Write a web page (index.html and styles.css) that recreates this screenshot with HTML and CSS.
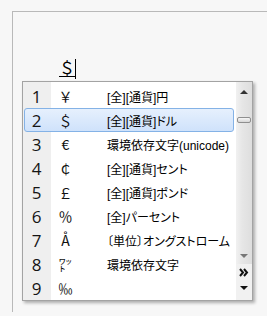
FILE: index.html
```html
<!DOCTYPE html>
<html lang="ja">
<head>
  <meta charset="UTF-8">
  <title>IME</title>
  <link rel="stylesheet" href="styles.css">
</head>
<body>
  <div class="frame">
    <div class="composition"><span class="typed">＄</span><span class="caret"></span></div>
    <div class="candidates">
      <ul class="list">
        <li class="row"><span class="num">1</span><span class="sym">￥</span><span class="desc">[全][通貨]円</span></li>
        <li class="row selected"><span class="num">2</span><span class="sym">＄</span><span class="desc">[全][通貨]ドル</span></li>
        <li class="row"><span class="num">3</span><span class="sym">€</span><span class="desc">環境依存文字(unicode)</span></li>
        <li class="row"><span class="num">4</span><span class="sym">￠</span><span class="desc">[全][通貨]セント</span></li>
        <li class="row"><span class="num">5</span><span class="sym">￡</span><span class="desc">[全][通貨]ポンド</span></li>
        <li class="row"><span class="num">6</span><span class="sym">％</span><span class="desc">[全]パーセント</span></li>
        <li class="row"><span class="num">7</span><span class="sym">Å</span><span class="desc">〔単位〕オングストローム</span></li>
        <li class="row"><span class="num">8</span><span class="sym">㍗</span><span class="desc">環境依存文字</span></li>
        <li class="row"><span class="num">9</span><span class="sym">‰</span><span class="desc"></span></li>
      </ul>
      <div class="scrollbar">
        <div class="track">
          <span class="arrow-up"></span>
          <span class="thumb"></span>
          <span class="arrow-down small"></span>
        </div>
        <div class="more">
          <svg width="10" height="9" viewBox="0 0 10 9">
            <path d="M1 1 L4 4.5 L1 8 M5 1 L8 4.5 L5 8" fill="none" stroke="#111" stroke-width="2"/>
          </svg>
          <span class="arrow-down"></span>
        </div>
      </div>
    </div>
  </div>
</body>
</html>
```

FILE: styles.css
```css
body {
  margin: 0;
  background-color: #f7f7f7;
  font-family: "Noto Sans CJK JP", sans-serif;
  overflow: hidden;
}

.frame {
  margin: 11px 0 0 12px;
  height: 300px;
  border-top: 1px solid #b9b9b9;
  border-left: 1px solid #b9b9b9;
}

.composition {
  margin: 47px 0 0 46px;
  height: 20px;
  display: flex;
  align-items: flex-start;
}

.typed {
  display: block;
  width: 16px;
  height: 17px;
  font-size: 16px;
  line-height: 17px;
  border-bottom: 1px solid #000;
  color: #000;
}

.caret {
  display: block;
  width: 1px;
  height: 20px;
  background-color: #000;
}

.candidates {
  margin: 2px 0 0 9px;
  width: 229px;
  display: flex;
  background-color: #fff;
  border: 1px solid #a3a3a3;
  box-shadow: 2px 2px 3px rgba(0, 0, 0, 0.3);
}

.list {
  list-style: none;
  margin: 0;
  padding: 2px 0 0;
  width: 213px;
  background: linear-gradient(to right, #efefef 28px, #fff 28px);
}

.row {
  box-sizing: border-box;
  height: 24px;
  margin: 0 2px 0 1px;
  display: flex;
  align-items: center;
  border: 1px solid transparent;
}

.row.selected {
  border-color: #84b2e6;
  border-radius: 3px;
  background: linear-gradient(#e6f0fd, #cfe2fb);
}

.num {
  width: 27px;
  margin-left: -2px;
  text-align: center;
  font-family: "Open Sans", sans-serif;
  font-size: 17px;
  color: #151515;
}

.sym {
  width: 31px;
  text-align: center;
  font-size: 14px;
  color: #111;
}

.desc {
  padding-left: 26px;
  font-family: "Liberation Sans", "Noto Sans CJK JP", sans-serif;
  font-size: 12px;
  font-feature-settings: "palt";
  color: #000;
  white-space: nowrap;
}

.scrollbar {
  width: 16px;
  display: flex;
  flex-direction: column;
}

.track {
  flex: 1;
  display: flex;
  flex-direction: column;
  align-items: center;
  background: linear-gradient(to right, #f1f1f1, #e6e6e6 40%, #dedede);
}

.arrow-up {
  margin-top: 8px;
  border-left: 4px solid transparent;
  border-right: 4px solid transparent;
  border-bottom: 4px solid #333;
}

.thumb {
  box-sizing: border-box;
  margin-top: 23px;
  width: 14px;
  height: 6px;
  border: 1px solid #8f8f8f;
  border-radius: 2px;
  background: linear-gradient(#f7f7f7, #d6d6d6);
}

.arrow-down {
  border-left: 4px solid transparent;
  border-right: 4px solid transparent;
  border-top: 4px solid #111;
}

.arrow-down.small {
  margin-top: auto;
  margin-bottom: 6px;
  border-top-color: #777;
}

.more {
  height: 36px;
  display: flex;
  flex-direction: column;
  align-items: center;
  gap: 9px;
  padding-top: 4px;
  box-sizing: border-box;
  background-color: #f1f1f1;
}
```
